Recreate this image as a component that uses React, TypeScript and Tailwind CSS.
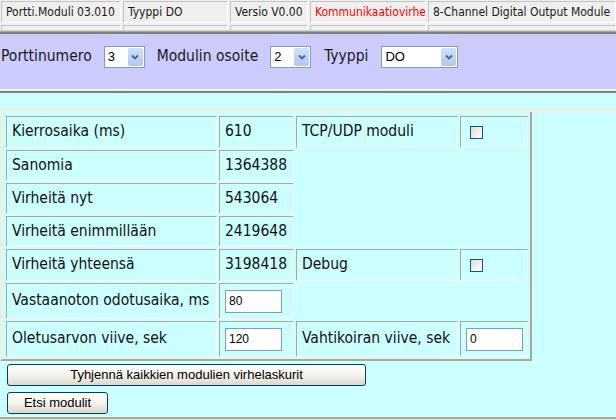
const tahc = "font-['DejaVu_Sans_Condensed','DejaVu_Sans',sans-serif]";
const ari = "font-['Liberation_Sans',Arial,sans-serif]";

const HeadCell = ({ w, children, red }: { w: string; children?: React.ReactNode; red?: boolean }) => (
  <div
    className={`${w} h-[22px] shrink-0 flex items-center pl-[4px] border border-t-[#c4c4c4] border-l-[#c4c4c4] border-b-white border-r-white text-[12px] whitespace-nowrap overflow-hidden ${tahc} ${red ? 'text-[#ff0000]' : 'text-[#1a1a1a]'}`}
  >
    {children}
  </div>
);

const Select = ({ value, w }: { value: string; w: string }) => (
  <div className={`${w} h-[22px] flex items-center border border-[#7f9db9] bg-white shrink-0`}>
    <span className={`flex-1 pl-[3px] text-[13px] text-black ${ari}`}>{value}</span>
    <div className="w-[15px] h-[18px] mr-[1px] rounded-[2px] bg-linear-to-b from-[#d3e0fd] to-[#b0c6f6] flex items-center justify-center">
      <svg width="8" height="6" viewBox="0 0 8 6">
        <path d="M1 1.5 L4 4.5 L7 1.5" fill="none" stroke="#4d6185" strokeWidth="1.8" />
      </svg>
    </div>
  </div>
);

const Cell = ({ children, pad = 'pl-[5px]' }: { children?: React.ReactNode; pad?: string }) => (
  <div
    className={`flex items-center ${pad} border border-t-[#aca899] border-l-[#aca899] border-b-white border-r-white text-[15.5px] text-[#111] whitespace-nowrap ${tahc}`}
  >
    {children}
  </div>
);

const Empty = () => <div />;

const Check = () => (
  <div className="w-[13px] h-[13px] border border-[#1c5180] bg-linear-to-br from-[#dcdcd7] to-white" />
);

const Input = ({ value }: { value: string }) => (
  <div className={`w-[57px] h-[23px] border border-[#7f9db9] bg-white flex items-center pl-[3px] text-[12px] text-black ${ari}`}>
    {value}
  </div>
);

const XpButton = ({ w, children }: { w: string; children: React.ReactNode }) => (
  <div
    className={`${w} h-[22px] ml-[7px] rounded-[3px] border border-[#003c74] bg-linear-to-b from-white via-[#f4f3ee] to-[#dcd8cc] flex items-center justify-center text-[13px] text-black ${ari}`}
  >
    {children}
  </div>
);

export default function App() {
  return (
    <div className="w-[616px] h-[420px] overflow-hidden flex flex-col bg-[#ccffff]">
      {/* top status frame */}
      <div className="h-[30px] bg-[#efefef] overflow-hidden pt-[1px] pl-[1px] flex flex-col gap-[2px]">
        <div className="flex gap-[2px]">
          <HeadCell w="w-[120px]">Portti.Moduli 03.010</HeadCell>
          <HeadCell w="w-[105px]">Tyyppi DO</HeadCell>
          <HeadCell w="w-[78px]">Versio V0.00</HeadCell>
          <HeadCell w="w-[116px]" red>Kommunikaatiovirhe</HeadCell>
          <HeadCell w="w-[188px]">8-Channel Digital Output Module</HeadCell>
        </div>
        <div className="flex gap-[2px]">
          <HeadCell w="w-[120px]" />
          <HeadCell w="w-[105px]" />
          <HeadCell w="w-[78px]" />
          <HeadCell w="w-[116px]" />
          <HeadCell w="w-[188px]" />
        </div>
      </div>
      <div className="h-[1px] bg-[#d4d0c8]" />
      <div className="h-[1px] bg-[#aca899]" />
      <div className="h-[2px] bg-[#808080]" />

      {/* selection frame */}
      <div className={`h-[55px] bg-[#ccccff] pt-[12px] pl-[1px] text-[15.5px] text-[#1a1a1a] ${tahc}`}>
        <div className="flex items-center h-[22px]">
          <span>Porttinumero</span>
          <div className="ml-[12px] mr-[12px]"><Select value="3" w="w-[41px]" /></div>
          <span>Modulin osoite</span>
          <div className="ml-[12px] mr-[13px]"><Select value="2" w="w-[41px]" /></div>
          <span>Tyyppi</span>
          <div className="ml-[13px]"><Select value="DO" w="w-[77px]" /></div>
        </div>
      </div>
      <div className="h-[1px] bg-white" />
      <div className="h-[1px] bg-[#ece9d8]" />
      <div className="h-[2px] bg-[#808080]" />

      {/* main frame */}
      <div className="h-[324px] flex flex-col">
        <div className="h-[16px]" />
        <div className="h-[3px] bg-[#f1efe2]" />
        <div className="w-[532px] border-l-2 border-l-[#f1efe2] border-r-2 border-r-[#aca899] border-b-2 border-b-[#aca899] pt-[4px] pl-[4px] pr-[2px] pb-[2px]">
          <div className="grid grid-cols-[211px_75px_162px_68px] grid-rows-[32px_31px_31px_31px_32px_36px_36px] gap-[2px]">
            <Cell>Kierrosaika (ms)</Cell>
            <Cell>610</Cell>
            <Cell>TCP/UDP moduli</Cell>
            <Cell pad="pl-[9px]"><Check /></Cell>

            <Cell>Sanomia</Cell>
            <Cell>1364388</Cell>
            <Empty />
            <Empty />

            <Cell>Virheitä nyt</Cell>
            <Cell>543064</Cell>
            <Empty />
            <Empty />

            <Cell>Virheitä enimmillään</Cell>
            <Cell>2419648</Cell>
            <Empty />
            <Empty />

            <Cell>Virheitä yhteensä</Cell>
            <Cell>3198418</Cell>
            <Cell>Debug</Cell>
            <Cell pad="pl-[9px]"><Check /></Cell>

            <Cell>Vastaanoton odotusaika, ms</Cell>
            <Cell><Input value="80" /></Cell>
            <Empty />
            <Empty />

            <Cell>Oletusarvon viive, sek</Cell>
            <Cell><Input value="120" /></Cell>
            <Cell>Vahtikoiran viive, sek</Cell>
            <Cell><Input value="0" /></Cell>
          </div>
        </div>
        <div className="mt-[3px]">
          <XpButton w="w-[359px]">Tyhjennä kaikkien modulien virhelaskurit</XpButton>
        </div>
        <div className="mt-[6px]">
          <XpButton w="w-[101px]">Etsi modulit</XpButton>
        </div>
      </div>
      <div className="h-[2px] bg-[#aca899]" />
      <div className="h-[1px] bg-[#ece9d8]" />
    </div>
  );
}
